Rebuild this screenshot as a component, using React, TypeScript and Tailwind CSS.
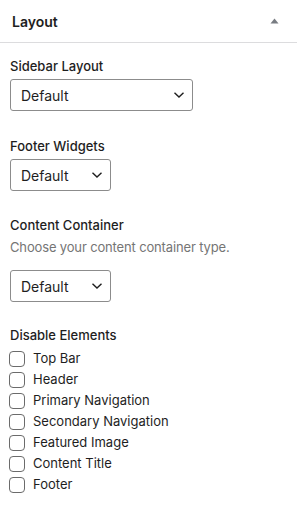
import React from "react";

const font = { fontFamily: "Inter, 'Liberation Sans', sans-serif" };

function Chevron() {
  return (
    <svg width="12" height="8" viewBox="0 0 12 8" className="shrink-0">
      <path d="M1.5 1.8 L6 6 L10.5 1.8" fill="none" stroke="#1e1e1e" strokeWidth="1.4" />
    </svg>
  );
}

function Select({ wide }: { wide?: boolean }) {
  return (
    <div
      className={`flex items-center justify-between h-[32px] border border-[#8c8c8c] rounded-[3px] pl-[10px] pr-[7px] text-[14px] text-[#1e1e1e] ${
        wide ? "w-[183px]" : "w-[101px]"
      }`}
    >
      <span>Default</span>
      <Chevron />
    </div>
  );
}

const items = [
  "Top Bar",
  "Header",
  "Primary Navigation",
  "Secondary Navigation",
  "Featured Image",
  "Content Title",
  "Footer",
];

export default function App() {
  return (
    <div className="w-[297px] h-[506px] bg-white text-[#1e1e1e]" style={font}>
      <div className="flex items-center justify-between h-[43px] pl-[12px] pr-[18px] border-b border-[#dcdcde]">
        <span className="text-[14px] font-semibold">Layout</span>
        <svg width="9" height="6" viewBox="0 0 9 6">
          <path d="M0.5 5.5 L4.5 0.5 L8.5 5.5 Z" fill="#787c82" />
        </svg>
      </div>
      <div className="px-[10px] pt-[14px]">
        <div className="text-[13px] font-medium leading-[18px] mb-[4px]">Sidebar Layout</div>
        <Select wide />
        <div className="text-[13px] font-medium leading-[18px] mt-[26px] mb-[4px]">Footer Widgets</div>
        <Select />
        <div className="text-[13px] font-medium leading-[18px] mt-[25px]">Content Container</div>
        <div className="text-[13px] leading-[18px] text-[#757575] tracking-[-0.15px] mt-[4px] mb-[14px]">
          Choose your content container type.
        </div>
        <Select />
        <div className="text-[13px] font-medium leading-[18px] mt-[24px] mb-[4px]">Disable Elements</div>
        <div className="flex flex-col">
          {items.map((t) => (
            <label key={t} className="flex items-center h-[21px] gap-[8px] text-[13px]">
              <span className="w-[16px] h-[16px] border border-[#6b6b6b] rounded-[4px] -ml-[1px] bg-white" />
              <span>{t}</span>
            </label>
          ))}
        </div>
      </div>
    </div>
  );
}
